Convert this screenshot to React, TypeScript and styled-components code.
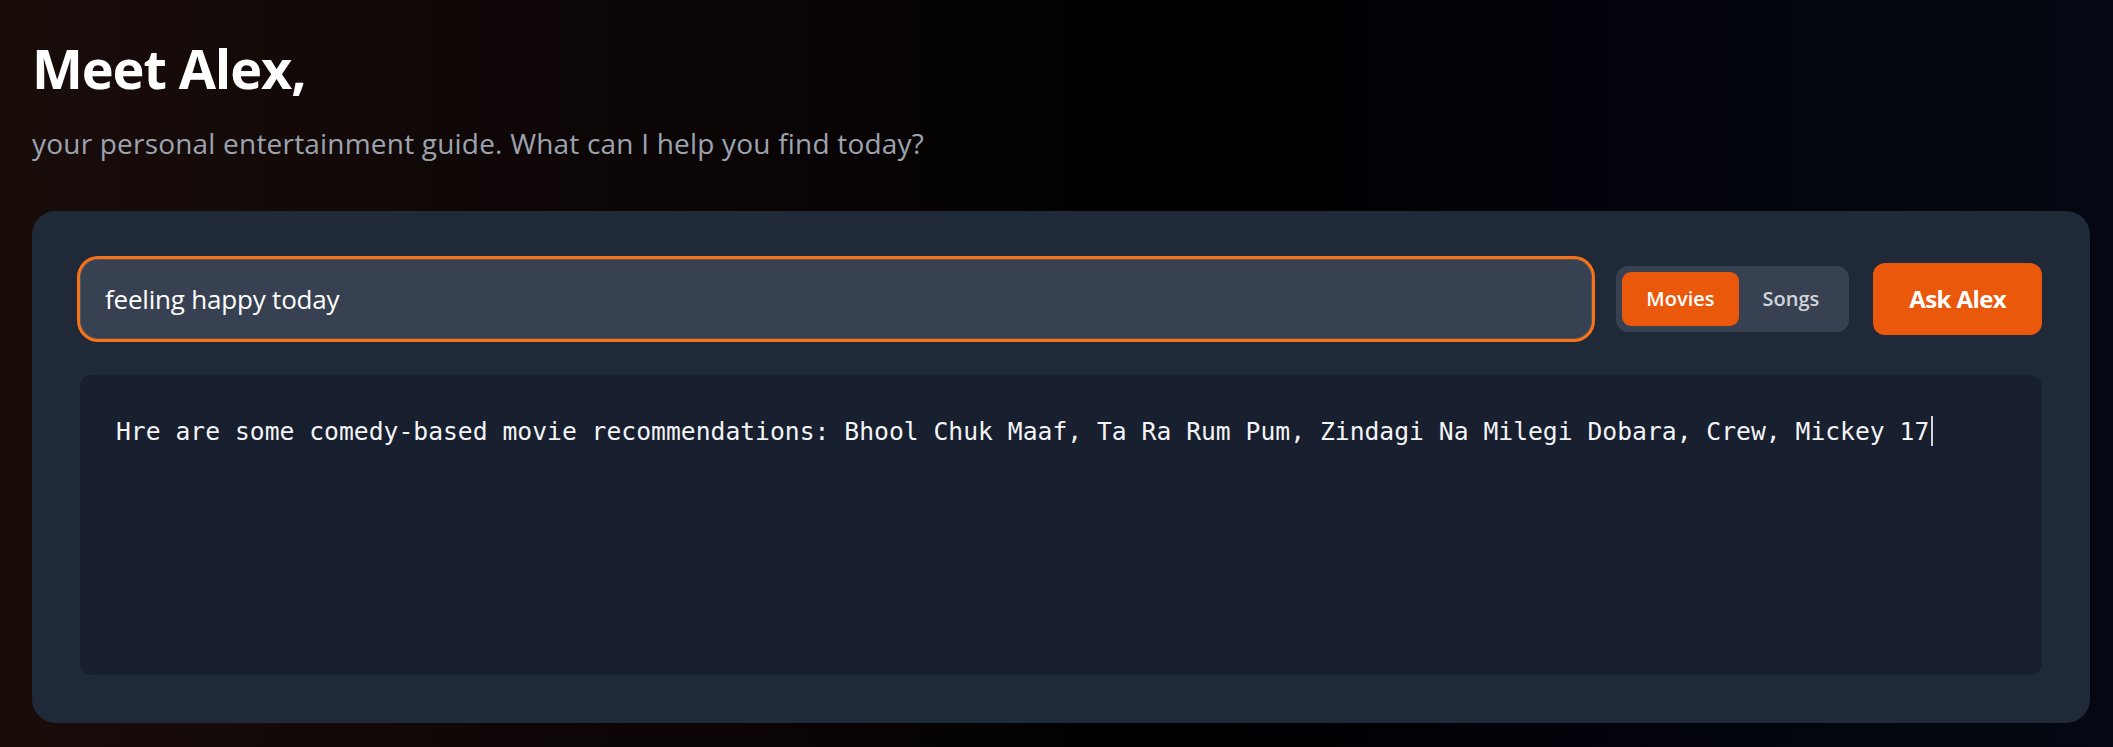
import React, { useState } from "react";
import styled, { createGlobalStyle } from "styled-components";

const GlobalStyle = createGlobalStyle`
  html, body {
    margin: 0;
    padding: 0;
  }
  body {
    font-family: "Open Sans", "Noto Sans", sans-serif;
    background: #000;
  }
  * { box-sizing: border-box; }
`;

const Page = styled.main`
  min-height: 747px;
  padding: 38px 23px 24px 32px;
  background: linear-gradient(to right, #190d0a 0%, #0a0405 35%, #000000 55%, #02030a 75%, #050812 100%);
  color: #fff;
`;

const Title = styled.h1`
  margin: 0;
  font-size: 54px;
  line-height: 60px;
  font-weight: 700;
  letter-spacing: -1.1px;
  color: #ffffff;
`;

const Subtitle = styled.p`
  margin: 24px 0 47px;
  font-size: 28px;
  line-height: 42px;
  font-weight: 400;
  letter-spacing: 0.2px;
  color: #9ca3af;
`;

const Card = styled.section`
  background: #1f2937;
  border-radius: 24px;
  padding: 48px;
  display: flex;
  flex-direction: column;
  gap: 36px;
`;

const Row = styled.div`
  display: flex;
  align-items: center;
  gap: 24px;
`;

const Input = styled.input`
  flex: 1;
  min-width: 0;
  height: 80px;
  padding: 0 24px;
  font-family: inherit;
  font-size: 26px;
  letter-spacing: -0.2px;
  color: #ffffff;
  background: #374151;
  border: 1px solid #4b5563;
  border-radius: 18px;
  box-shadow: 0 0 0 3px #f97316;
  outline: none;
`;

const Toggle = styled.div`
  display: flex;
  padding: 6px;
  background: #374151;
  border-radius: 12px;
`;

const ToggleButton = styled.button<{ $active: boolean }>`
  border: none;
  cursor: pointer;
  font-family: inherit;
  font-size: 20px;
  line-height: 30px;
  font-weight: 600;
  padding: 12px 24px;
  border-radius: 9px;
  background: ${(p) => (p.$active ? "#ea580c" : "transparent")};
  color: ${(p) => (p.$active ? "#ffffff" : "#d1d5db")};
`;

const AskButton = styled.button`
  border: none;
  cursor: pointer;
  font-family: inherit;
  font-size: 24px;
  line-height: 36px;
  font-weight: 700;
  letter-spacing: -0.6px;
  color: #ffffff;
  padding: 18px 36px;
  border-radius: 12px;
  background: #ea580c;
`;

const Output = styled.div`
  min-height: 300px;
  padding: 36px;
  background: #181f2f;
  border-radius: 12px;
  font-family: "DejaVu Sans Mono", "Liberation Mono", monospace;
  font-size: 24.7px;
  line-height: 42px;
  color: #f3f4f6;
  white-space: pre-wrap;
`;

const Caret = styled.span`
  display: inline-block;
  width: 2px;
  height: 30px;
  margin-left: 2px;
  vertical-align: -6px;
  background: #d1d5db;
`;

export default function App() {
  const [mode, setMode] = useState<"movies" | "songs">("movies");
  return (
    <>
      <GlobalStyle />
      <Page>
        <Title>Meet Alex,</Title>
        <Subtitle>your personal entertainment guide. What can I help you find today?</Subtitle>
        <Card>
          <Row>
            <Input defaultValue="feeling happy today" />
            <Toggle>
              <ToggleButton $active={mode === "movies"} onClick={() => setMode("movies")}>
                Movies
              </ToggleButton>
              <ToggleButton $active={mode === "songs"} onClick={() => setMode("songs")}>
                Songs
              </ToggleButton>
            </Toggle>
            <AskButton>Ask Alex</AskButton>
          </Row>
          <Output>
            Hre are some comedy-based movie recommendations: Bhool Chuk Maaf, Ta Ra Rum Pum, Zindagi Na Milegi Dobara, Crew, Mickey 17
            <Caret />
          </Output>
        </Card>
      </Page>
    </>
  );
}
